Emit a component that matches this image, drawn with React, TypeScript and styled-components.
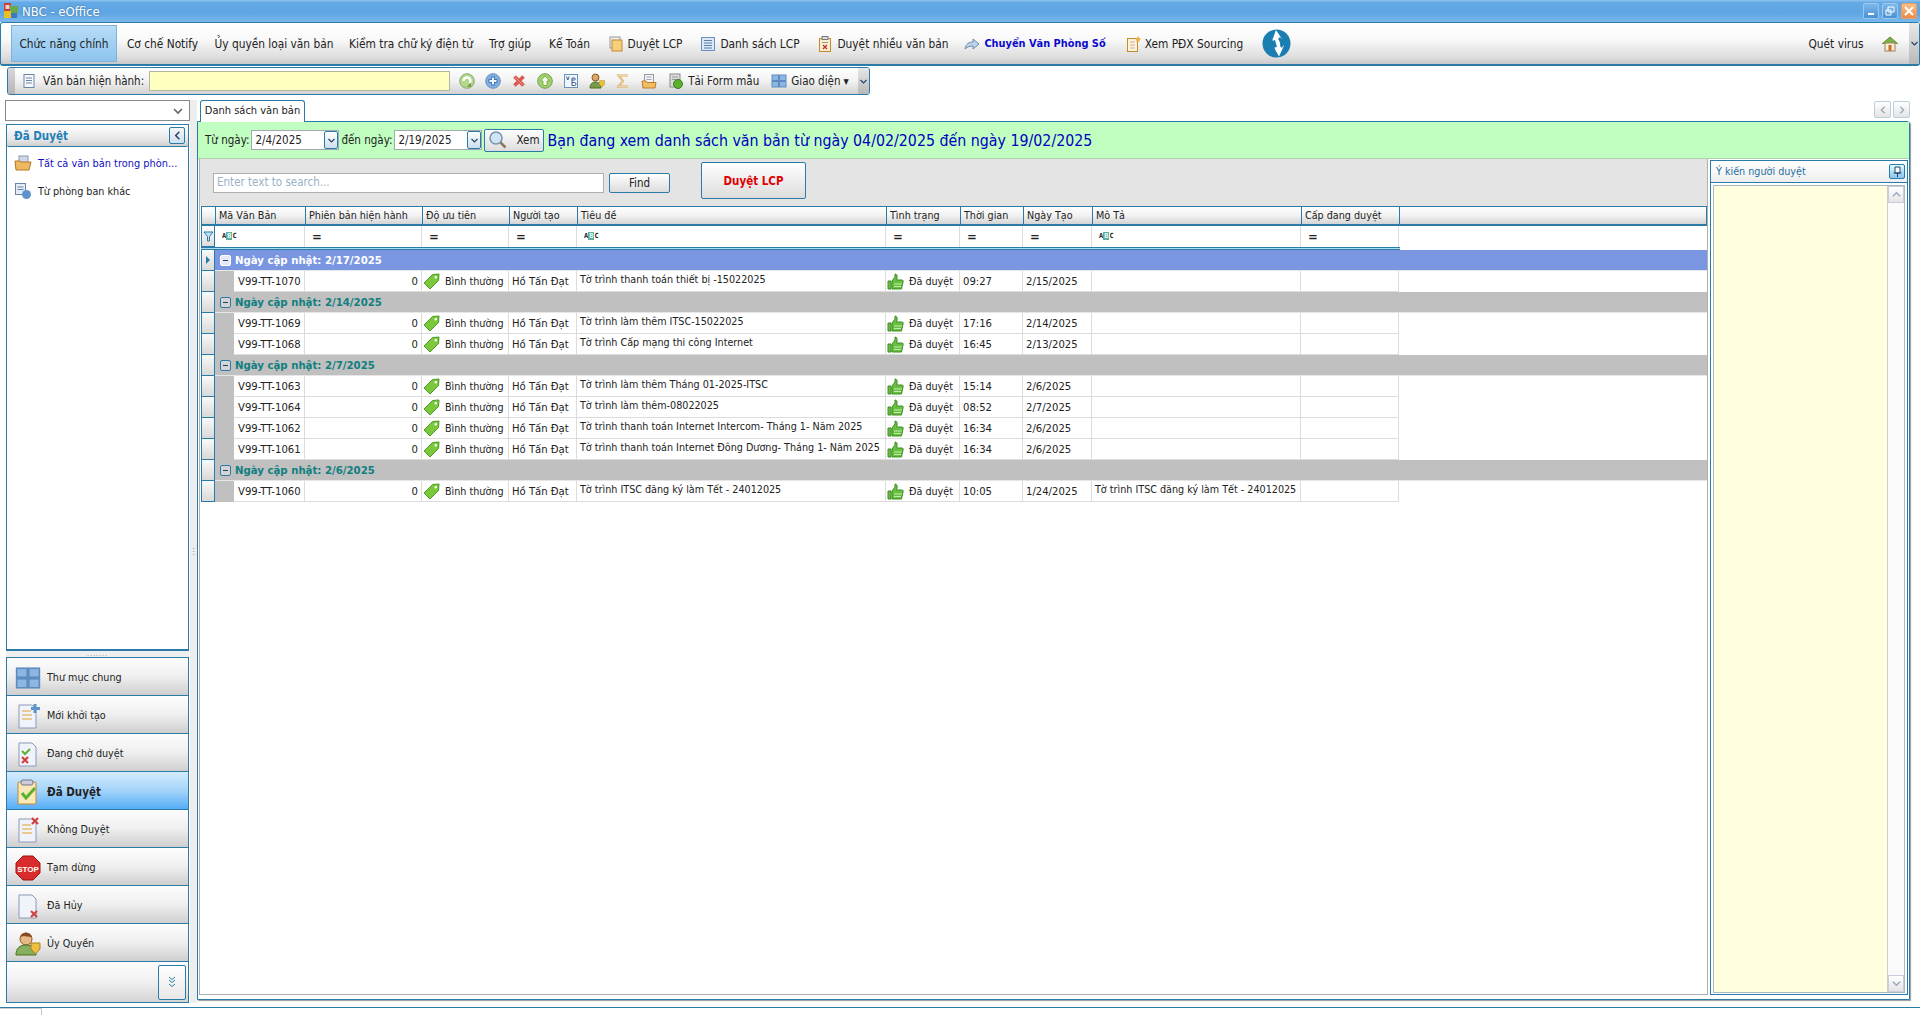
import React from 'react';
import styled, { createGlobalStyle } from 'styled-components';

const Global = createGlobalStyle`
  html, body { margin: 0; padding: 0; background: #fff; overflow: hidden; }
  * { box-sizing: border-box; }
  body { font-family: "DejaVu Sans Condensed", "DejaVu Sans", sans-serif; font-size: 11.5px; color: #222; }
`;

const BLUE = '#2a7ba8';
const FS = '11.5px';
const FS_MENU = '11.8px';
const FS_SM = '10.7px';

const Page = styled.div`width:1920px;height:1015px;display:flex;flex-direction:column;overflow:hidden;background:#fff;`;

const TitleBar = styled.div`height:22px;display:flex;align-items:center;padding-left:3px;flex:none;
  background:linear-gradient(#8fc3ef 0,#63a9e6 12%,#5fa5e3 60%,#7ab8ec 100%);`;
const TitleText = styled.span`color:#fff;font-size:13px;margin-left:3px;text-shadow:0 0 2px #35689a;flex:1;`;
const WinButton = styled.span<{ $close?: boolean }>`width:16px;height:16px;margin-right:3px;border-radius:2px;display:flex;align-items:center;justify-content:center;
  border:1px solid ${p => p.$close ? '#e4a070' : '#9cc8ee'};
  background:${p => p.$close ? 'linear-gradient(#f8c080,#ec8a4a)' : 'linear-gradient(#7db8ea,#4a90d4)'};`;

const MenuBar = styled.div`height:44px;flex:none;display:flex;align-items:stretch;border:1px solid ${BLUE};border-bottom-width:2px;border-radius:3px;
  background:linear-gradient(#fff 0,#f9f9f9 40%,#dcdcdc 85%,#c9c9c9 100%);padding:2px 0 2px 10px;`;
const MenuItem = styled.div<{ $w: number; $active?: boolean; $strong?: boolean }>`width:${p => p.$w}px;flex:none;display:flex;align-items:center;justify-content:center;gap:4px;white-space:nowrap;font-size:${p => p.$strong ? '10.9px' : FS_MENU};
  ${p => p.$active ? 'background:linear-gradient(#b8dcf6,#8cc4ee);border:1px solid #7fb2d8;' : ''}
  ${p => p.$strong ? 'font-weight:700;color:#0a0ad0;' : ''}`;
const MenuSpacer = styled.div`flex:1;`;
const EdgeStrip = styled.div<{ $w?: number }>`width:${p => p.$w ?? 10}px;flex:none;align-self:stretch;display:flex;align-items:center;justify-content:center;
  background:linear-gradient(#e8e8e8,#b8b8b8);color:#356;font-size:9px;`;
const MenuEnd = styled(EdgeStrip)`margin:-2px 0;`;

const ToolBar = styled.div`height:28px;width:863px;margin:1px 0 0 7px;flex:none;display:flex;align-items:center;border:1px solid ${BLUE};border-radius:3px;overflow:hidden;
  background:linear-gradient(#fff,#f2f2f2 50%,#d2d2d2);`;
const Grip = styled.div`width:7px;align-self:stretch;background:linear-gradient(#d8d8d8,#b4b4b4);flex:none;`;
const ToolLabel = styled.span`margin-left:6px;white-space:nowrap;font-size:${FS};`;
const CurrentDoc = styled.div`width:301px;height:20px;margin:0 9px 0 5px;flex:none;background:#ffffc0;border:1px solid #b4b4a0;`;
const ToolIcon = styled.span<{ $gap?: number; $lead?: number }>`margin-right:${p => p.$gap ?? 10}px;margin-left:${p => p.$lead ?? 0}px;display:flex;flex:none;`;
const ToolText = styled.span<{ $gap?: number }>`white-space:nowrap;font-size:${FS};margin-right:${p => p.$gap ?? 12}px;`;
const ToolFill = styled.div`flex:1;`;

const Content = styled.div`flex:none;height:903px;margin-top:5px;display:flex;padding-left:5px;`;
const LeftCol = styled.div`width:185px;flex:none;display:flex;flex-direction:column;`;
const Combo = styled.div`height:21px;flex:none;border:1px solid #8a8a8a;background:#fff;display:flex;align-items:center;justify-content:flex-end;padding-right:5px;`;
const TreePanel = styled.div`flex:1;margin:3px 1px 0;border:1px solid ${BLUE};display:flex;flex-direction:column;min-height:0;`;
const TreeHead = styled.div`height:22px;flex:none;display:flex;align-items:center;justify-content:space-between;padding:0 3px 0 7px;border-bottom:1px solid ${BLUE};
  background:linear-gradient(#fff,#e6e6e6 70%,#cfcfcf);color:#1f7fb8;font-weight:700;font-size:${FS};border-radius:2px;`;
const Collapse = styled.span`width:16px;height:17px;border:1px solid ${BLUE};border-radius:2px;background:linear-gradient(#f6f6f6,#cfe0ee);display:flex;align-items:center;justify-content:center;`;
const TreeItem = styled.div<{ $link?: boolean; $y: number }>`display:flex;align-items:center;height:22px;margin-top:${p => p.$y}px;padding-left:7px;gap:6px;color:${p => p.$link ? '#1010c0' : '#222'};font-size:${p => p.$link ? '10.9px' : FS_SM};white-space:nowrap;`;
const Handle = styled.div`height:7px;flex:none;margin:0 1px;background:#efefef;border-top:1px solid ${BLUE};display:flex;justify-content:center;align-items:center;color:#888;font-size:7px;line-height:4px;letter-spacing:1px;`;
const NavBox = styled.div`margin:0 1px;flex:none;border:1px solid ${BLUE};border-top:none;`;
const NavItem = styled.div<{ $active?: boolean }>`height:38px;display:flex;align-items:center;border-top:1px solid ${BLUE};font-size:${p => p.$active ? FS : FS_SM};white-space:nowrap;padding-top:2px;
  font-weight:${p => p.$active ? 700 : 400};
  background:${p => p.$active ? 'linear-gradient(#d4ecff,#a4d4fa 50%,#55aef6)' : 'linear-gradient(#fdfdfd,#efefef 50%,#cfcfcf)'};`;
const NavIcon = styled.span`width:40px;padding-left:8px;flex:none;display:flex;align-items:center;`;
const NavFoot = styled.div`height:41px;border-top:1px solid ${BLUE};display:flex;justify-content:flex-end;align-items:center;padding-right:2px;background:linear-gradient(#fdfdfd,#f0f0f0 50%,#d4d4d4);`;
const MoreBtn = styled.span`width:28px;height:35px;border:1px solid ${BLUE};border-radius:2px;color:${BLUE};display:flex;align-items:center;justify-content:center;background:linear-gradient(#fff,#e8e8e8);`;

const Splitter = styled.div`width:7px;flex:none;background:#ededed;display:flex;align-items:center;justify-content:center;color:#777;font-size:8px;line-height:4px;`;

const RightCol = styled.div`width:1714px;flex:none;display:flex;flex-direction:column;`;
const TabStrip = styled.div`height:21px;flex:none;display:flex;align-items:flex-end;padding:0 1px 0 3px;`;
const Tab = styled.div`width:105px;height:22px;margin-bottom:-1px;padding-bottom:2px;border:1px solid ${BLUE};border-bottom:none;border-radius:3px 3px 0 0;background:#fff;display:flex;align-items:center;justify-content:center;font-size:11px;white-space:nowrap;position:relative;z-index:1;`;
const TabFill = styled.div`flex:1;`;
const ScrollBtn = styled.span`width:17px;height:17px;margin:0 0 3px 2px;border:1px solid #b8cfe0;border-radius:2px;background:linear-gradient(#fff,#e4e4e4);display:flex;align-items:center;justify-content:center;`;
const MainPanel = styled.div`height:879px;width:1713px;flex:none;border:1px solid ${BLUE};border-radius:0 3px 0 0;display:flex;flex-direction:column;padding:0 0 2px 0;box-shadow:1px 1px 1px #999;`;
const DateBand = styled.div`height:37px;flex:none;background:#c0ffc0;border-bottom:1px solid #b0d0b0;display:flex;align-items:center;padding-left:7px;font-size:${FS};white-space:nowrap;`;
const DateBox = styled.div`width:88px;height:20px;margin:0 2px 0 2px;background:#fff;border:1px solid #a0a8b0;display:flex;align-items:center;justify-content:space-between;padding:0 0 0 3px;font-size:${FS};`;
const DropBtn = styled.span`width:14px;height:18px;border:1px solid ${BLUE};border-radius:2px;background:linear-gradient(#fff,#cde);display:flex;align-items:center;justify-content:center;`;
const ViewBtn = styled.div`width:60px;height:23px;border:1px solid ${BLUE};border-radius:2px;background:linear-gradient(#fff,#dcdcdc);display:flex;align-items:center;padding-left:3px;gap:8px;font-size:${FS};`;
const RangeText = styled.span`margin-left:3px;font-size:15.8px;color:#0000c0;`;

const Body = styled.div`flex:1;display:flex;min-height:0;padding-left:1px;`;
const GridSection = styled.div`width:1509px;flex:none;border:1px solid #aab2b8;border-top:none;display:flex;flex-direction:column;margin-bottom:2px;`;
const SearchBar = styled.div`height:47px;flex:none;background:#e4e4e4;display:flex;align-items:flex-start;padding-left:13px;`;
const SearchInput = styled.div`width:391px;height:20px;margin-top:14px;background:#fff;border:1px solid #b0b0b0;color:#9ab0c4;padding-left:3px;font-size:${FS};line-height:16px;`;
const FindBtn = styled.div`width:61px;height:20px;margin:14px 0 0 5px;border:1px solid ${BLUE};border-radius:2px;background:linear-gradient(#fff,#dcdcdc);display:flex;align-items:center;justify-content:center;font-size:${FS};`;
const ApproveBtn = styled.div`width:105px;height:37px;margin:3px 0 0 31px;border:1px solid ${BLUE};border-radius:2px;background:linear-gradient(#fff,#dcdcdc);display:flex;align-items:center;justify-content:center;color:#e00000;font-weight:700;font-size:${FS};`;

const COLS = '14px 90px 117px 87px 68px 309px 74px 63px 69px 209px 98px';
const RCOLS = '14px 19px 71px 117px 87px 68px 309px 74px 63px 69px 209px 98px';

const GridHead = styled.div`height:20px;flex:none;margin-left:1px;display:grid;grid-template-columns:${COLS} 1fr;border:1px solid ${BLUE};border-bottom-width:2px;background:linear-gradient(#fff,#f2f2f2 50%,#d4d4d4);`;
const HeadCell = styled.div`border-right:1px solid ${BLUE};padding-left:3px;line-height:17px;font-size:${FS_SM};white-space:nowrap;overflow:hidden;`;
const HeadEnd = styled.div``;
const FilterRow = styled.div`height:21px;flex:none;margin-left:1px;display:grid;grid-template-columns:${COLS};width:1199px;background:#fff;`;
const FilterCell = styled.div`border-right:1px solid #dcdcdc;display:flex;align-items:center;padding-left:7px;font-weight:700;font-size:13px;`;
const FilterLead = styled.div`border:1px solid ${BLUE};border-top:none;background:linear-gradient(#fff,#ddd);display:flex;align-items:center;justify-content:center;`;
const FilterEnd = styled.div`height:3px;flex:none;margin-left:1px;width:1199px;border-top:1px solid ${BLUE};border-bottom:1px solid ${BLUE};background:#a8ddf4;`;
const Abc = styled.span`font-family:"DejaVu Sans Mono",monospace;font-size:7px;font-weight:700;line-height:9px;`;
const AbcB = styled.span`background:#5fae9a;color:#dff;padding:0 1px;`;

const GridBody = styled.div`flex:1;margin-left:1px;background:#fff;`;
const GroupRow = styled.div`height:21px;display:flex;align-items:center;`;
const Lead = styled.div`width:14px;height:21px;flex:none;border:1px solid ${BLUE};border-top:none;background:linear-gradient(#fafafa,#d8d8d8);display:flex;align-items:center;justify-content:center;`;
const GroupLabel = styled.div<{ $first?: boolean }>`flex:1;height:21px;display:flex;align-items:center;padding-left:5px;gap:4px;font-weight:700;font-size:11.3px;border-bottom:1px solid #e6e6e6;
  background:${p => p.$first ? '#7a96e0' : '#c0c0c0'};color:${p => p.$first ? '#fff' : '#0f7f7f'};`;
const Toggle = styled.span<{ $first?: boolean }>`width:11px;height:11px;border:1px solid ${p => p.$first ? '#fff' : BLUE};border-radius:2px;background:${p => p.$first ? '#e4e8f8' : '#d4d4d4'};display:flex;align-items:center;justify-content:center;`;
const Minus = styled.span`width:5px;height:1px;background:#245;`;
const WinMinus = styled.span`width:6px;height:2px;background:#fff;margin-top:6px;`;
const DataRow = styled.div`height:21px;width:1199px;display:grid;grid-template-columns:${RCOLS};`;
const Indent = styled.div`background:#c0c0c0;`;
const Cell = styled.div<{ $right?: boolean; $raise?: boolean }>`border-right:1px solid #dcdcdc;border-bottom:1px solid #dcdcdc;display:flex;align-items:center;padding:${p => p.$raise ? '0 0 3px 3px' : '0 3px'};white-space:nowrap;overflow:hidden;font-size:${p => p.$raise ? FS_SM : '11.2px'};justify-content:${p => p.$right ? 'flex-end' : 'flex-start'};`;
const CodeCell = styled(Cell)`padding-left:4px;`;
const IconCell = styled(Cell)`padding-left:1px;gap:5px;font-size:${FS_SM};`;

const SidePane = styled.div`width:198px;margin-left:2px;flex:none;display:flex;flex-direction:column;border:1px solid ${BLUE};margin-top:1px;margin-bottom:2px;`;
const SideHead = styled.div`height:22px;flex:none;border-bottom:1px solid ${BLUE};background:linear-gradient(#fff,#eee);display:flex;align-items:center;justify-content:space-between;padding:0 2px 0 5px;color:#1f6f9f;font-size:${FS_SM};`;
const Pin = styled.span`width:16px;height:15px;border:1px solid ${BLUE};border-radius:2px;background:linear-gradient(#dff,#8cc4ee);display:flex;align-items:center;justify-content:center;`;
const SideBody = styled.div`flex:1;margin:2px 2px 1px 2px;display:flex;min-height:0;border:1px solid #a8b8c0;`;
const Note = styled.div`flex:1;background:#ffffe0;`;
const VScroll = styled.div`width:17px;flex:none;background:#fafafa;border-left:1px solid #ccc;display:flex;flex-direction:column;justify-content:space-between;`;
const VBtn = styled.span`height:17px;border:1px solid #ccd;background:linear-gradient(#fff,#e4e4e4);display:flex;align-items:center;justify-content:center;`;

const StatusBar = styled.div`height:8px;margin-top:4px;flex:none;border-top:1px solid ${BLUE};display:flex;`;
const StatusCell = styled.div`width:42px;border-right:1px solid #c8c8c8;border-top:1px solid #ccc;`;

const Svg: React.FC<{ s?: number; vb?: string; children: React.ReactNode }> = ({ s = 16, vb = '0 0 16 16', children }) => (
  <svg width={s} height={s} viewBox={vb} style={{ display: 'block', flex: 'none' }}>{children}</svg>
);
const AppLogo = () => <Svg s={16}><rect x="1" y="0" width="7" height="8" fill="#c9423a" /><rect x="2.500" y="2" width="4" height="4" fill="#f0d0c8" /><rect x="7" y="3" width="8" height="7" fill="#6aa84f" /><rect x="1" y="8" width="7" height="7" fill="#e8c020" /><rect x="8" y="10" width="6" height="5" fill="#3f78c0" /></Svg>;
const CopyI = () => <Svg><rect x="2" y="1" width="10" height="11" fill="#eee" stroke="#999" /><rect x="4" y="4" width="10" height="11" fill="#f6cf7c" stroke="#c58a2a" /></Svg>;
const ListI = () => <Svg><rect x="1.500" y="1.500" width="13" height="13" fill="#dce8f6" stroke="#6a8fc0" /><path d="M4 4.500h8M4 7h8M4 9.500h8M4 12h8" stroke="#5a7fb0" /></Svg>;
const ClipX = () => <Svg><rect x="2.500" y="2.500" width="11" height="13" fill="#fbeecb" stroke="#c48a30" /><rect x="5" y="0.500" width="6" height="3" fill="#ddd" stroke="#777" /><path d="M6 9l4 4M10 9l-4 4" stroke="#b33" strokeWidth="1.300" /><path d="M5 6.500h6" stroke="#999" /></Svg>;
const ShareI = () => <Svg><path d="M1 13C2 8 5 6 9 6V3l6 5-6 5v-3C6 10 3 11 1 13z" fill="#bcd3ea" stroke="#6c8cb0" /></Svg>;
const DocStar = () => <Svg><rect x="2.500" y="2.500" width="10" height="13" fill="#fff4d8" stroke="#c48a30" /><path d="M5 6h5M5 9h5M5 12h5" stroke="#caa" /><path d="M13 0l1 2 2 .5-1.500 1.500.3 2-1.800-1-1.800 1 .3-2L10 2.500 12 2z" fill="#e8b040" /></Svg>;
const RefreshLogo = () => (
  <Svg s={29} vb="0 0 29 29">
    <circle cx="14.500" cy="14.500" r="14" fill="#1a7fb0" />
    <path d="M14 1l6 9-3 .5 2 7 3-1-5 11-5-9 3-.5-2-7-3 1z" fill="#fff" />
    <path d="M11 12c-1 2 0 5 2 7l-2 2c-4-3-4-8-2-11zM18 17c1-2 0-5-2-7l2-2c4 3 4 8 2 11z" fill="#1a7fb0" />
  </Svg>
);
const HomeI = () => <Svg s={18} vb="0 0 18 18"><path d="M1 9l8-7 8 7" fill="#7db24a" stroke="#5a8a30" /><rect x="4" y="8" width="10" height="8" fill="#f7efd8" stroke="#a08050" /><rect x="7.500" y="10" width="3" height="6" fill="#c8702a" /></Svg>;
const NoteI = () => <Svg><rect x="3" y="1.500" width="10" height="13" fill="#f4f7fb" stroke="#6d86a6" /><path d="M5 5h6M5 7.500h6M5 10h6" stroke="#6d86a6" /></Svg>;
const RefreshI = () => <Svg><circle cx="8" cy="8" r="7.300" fill="#b4d88a" stroke="#8aa878" /><path d="M4.500 8a3.500 3.500 0 116 2.400" fill="none" stroke="#fff" strokeWidth="2.400" /><path d="M8 14l4.500-.5-1-4z" fill="#6f9a48" /></Svg>;
const PlusI = () => <Svg><circle cx="8" cy="8" r="7.300" fill="#7fb0e6" stroke="#6d8fb8" /><path d="M8 3.500v9M3.500 8h9" stroke="#3f6ea8" strokeWidth="3.600" /><path d="M8 4.500v7M4.500 8h7" stroke="#eef6ff" strokeWidth="2" /></Svg>;
const XI = () => <Svg><path d="M3.500 3.500l9 9M12.500 3.500l-9 9" stroke="#dc5a52" strokeWidth="3.800" /><path d="M4 4l8 8" stroke="#ee9088" strokeWidth="1" /></Svg>;
const UpI = () => <Svg><circle cx="8" cy="8" r="7.300" fill="#9ed468" stroke="#7a9a58" /><path d="M8 3l4.500 5H10v4.500H6V8H3.500z" fill="#f2fbe8" stroke="#6a9a40" strokeWidth=".7" /></Svg>;
const VbI = () => <Svg><rect x="1.500" y="1.500" width="13" height="13" fill="#f0f6fd" stroke="#6a90c0" /><path d="M3.500 3.500l1.300 3.500 1.300-3.500M9 7h2.300a1 1 0 000-2H9zM9 12.500V7M9 9.500h2.500a1.500 1.500 0 010 3H9" fill="none" stroke="#305080" strokeWidth=".9" /></Svg>;
const UserI = () => <Svg><circle cx="6.500" cy="4.500" r="3.500" fill="#d8a870" stroke="#8a5a20" /><path d="M1 15c0-4 2.500-6 5.500-6s5.500 2 5.500 6z" fill="#7a9a4a" stroke="#4a7020" /><path d="M10.500 7.500h5v4l-2.500 2.500-2.500-2.500z" fill="#e8c040" stroke="#b89020" strokeWidth=".5" /></Svg>;
const SigmaI = () => <Svg><path d="M13 2.500H3.500l4.500 5.500-4.500 5.500H13" fill="none" stroke="#dda860" strokeWidth="2" /><path d="M13 2.500H3.500l4.500 5.500-4.500 5.500H13" fill="none" stroke="#fbe8c8" strokeWidth=".7" /></Svg>;
const FolderDoc = () => <Svg><rect x="3.500" y="1.500" width="9" height="9" fill="#f3f3f3" stroke="#999" /><path d="M5.500 4h5M5.500 6.500h5" stroke="#9ab" /><path d="M1 8h4l1 1.500h9l-1 5.500H2z" fill="#f2bc62" stroke="#b87e2a" /></Svg>;
const FormI = () => <Svg><rect x="2" y="1" width="10" height="13" fill="#ddd" stroke="#888" /><path d="M4 4h6M4 6.500h4" stroke="#999" /><circle cx="10" cy="11" r="4.500" fill="#5cb030" stroke="#3a7a20" /></Svg>;
const GridI: React.FC<{ s?: number }> = ({ s = 16 }) => <Svg s={s}><rect x="1" y="2" width="6.500" height="5.500" fill="#8eb6e2" stroke="#5f8cc0" /><rect x="8.500" y="2" width="6.500" height="5.500" fill="#8eb6e2" stroke="#5f8cc0" /><rect x="1" y="8.500" width="6.500" height="5.500" fill="#8eb6e2" stroke="#5f8cc0" /><rect x="8.500" y="8.500" width="6.500" height="5.500" fill="#8eb6e2" stroke="#5f8cc0" /></Svg>;
const Chev: React.FC<{ dir: 'down' | 'up' | 'left' | 'right'; c?: string; s?: number }> = ({ dir, c = '#666', s = 9 }) => {
  const d = { down: 'M1.500 3l3 3 3-3', up: 'M1.500 6l3-3 3 3', left: 'M6 1.500l-3 3 3 3', right: 'M3 1.500l3 3-3 3' }[dir];
  return <Svg s={s} vb="0 0 9 9"><path d={d} fill="none" stroke={c} strokeWidth="1.200" /></Svg>;
};
const SearchI = () => <Svg s={20} vb="0 0 20 20"><circle cx="8" cy="8" r="6" fill="#cfe4f6" stroke="#7a93ad" strokeWidth="1.500" /><path d="M12.500 12.500l5 5" stroke="#8a7a5a" strokeWidth="2.500" /></Svg>;
const FolderOpen = () => <Svg s={18} vb="0 0 18 18"><rect x="5" y="2" width="9" height="8" fill="#cfd8ea" stroke="#8a98b0" /><path d="M1 7h5l1 1h10l-2 8H2z" fill="#eeb860" stroke="#b07a28" /></Svg>;
const DeptI = () => <Svg s={18} vb="0 0 18 18"><rect x="1.500" y="1.500" width="10" height="11" fill="#e4ecf6" stroke="#6a86a8" /><path d="M3.500 5h6M3.500 7.500h6" stroke="#6a86a8" /><circle cx="12.500" cy="12.500" r="4.500" fill="#5f93cc" /></Svg>;
const TagI = () => <Svg s={17} vb="0 0 17 17"><path d="M16 1l-.5 6.500L7 16 1 10l8.500-8.500z" fill="#7cc83c" stroke="#4d9a28" /><circle cx="12.800" cy="4.200" r="1.200" fill="#fff" /></Svg>;
const ThumbI = () => <Svg s={17} vb="0 0 17 17"><path d="M1 8h3v8H1zM5 8l3-4V1c2 0 2.500 2 2 4l-.3 2H15c1.200 0 1.500 1 1 2l-1.500 7H5z" fill="#69c040" stroke="#3f8c24" /><path d="M7 11h8M7 13.500h7" stroke="#c0ecb0" /></Svg>;
const FunnelI = () => <Svg s={11} vb="0 0 11 11"><path d="M1 1h9L6.500 5.500V10h-2V5.500z" fill="#bfe4f4" stroke="#2a7ba8" /></Svg>;
const Arrow = () => <Svg s={8} vb="0 0 8 8"><path d="M2 0l4 4-4 4z" fill="#2a7ba8" /></Svg>;
const PinI = () => <Svg s={11} vb="0 0 11 11"><path d="M3 1h5v6H3zM1.500 7h8M5.500 7v4" fill="#fff" stroke="#246" /></Svg>;

const NavPage: React.FC<{ children?: React.ReactNode }> = ({ children }) => <Svg s={26} vb="0 0 26 26"><path d="M4 2h13l4 4v19H4z" fill="#f0f4fa" stroke="#8a9ab8" />{children}</Svg>;
const NavStop = () => <Svg s={26} vb="0 0 26 26"><path d="M8 1h10l7 7v10l-7 7H8l-7-7V8z" fill="#d92b2b" stroke="#9a1414" /><text x="13" y="16.500" fontSize="8" fontWeight="700" fill="#fff" textAnchor="middle" fontFamily="Liberation Sans, sans-serif">STOP</text></Svg>;
const NavUser = () => <Svg s={26} vb="0 0 26 26"><circle cx="11" cy="8" r="6" fill="#e8b888" stroke="#8a5a20" /><path d="M5 6c2-6 11-5 12 0-4 0-8-1-8-1z" fill="#8a4a20" /><path d="M1 24c0-7 4-10 10-10s10 3 10 10z" fill="#86b060" stroke="#4a7020" /><path d="M16 12h9v6l-4.500 5-4.500-5z" fill="#eec040" stroke="#a88020" /></Svg>;
const NavClip = () => <Svg s={26} vb="0 0 26 26"><rect x="3" y="3" width="18" height="22" rx="1" fill="#fbe8b8" stroke="#c08a30" /><rect x="6" y="1" width="12" height="5" rx="2" fill="#ccd" stroke="#778" /><path d="M7 14l4 5 9-10" fill="none" stroke="#5ab030" strokeWidth="3" /></Svg>;
const X2: React.FC<{ x: number; y: number }> = ({ x, y }) => <path d={`M${x} ${y}l6 6M${x + 6} ${y}l-6 6`} stroke="#d04040" strokeWidth="2.200" />;

const menus = [
  { w: 106, t: 'Chức năng chính', active: true },
  { w: 91, t: 'Cơ chế Notify' },
  { w: 132, t: 'Ủy quyền loại văn bản' },
  { w: 142, t: 'Kiểm tra chữ ký điện tử' },
  { w: 56, t: 'Trợ giúp' },
  { w: 63, t: 'Kế Toán' },
  { w: 88, t: 'Duyệt LCP', i: <CopyI /> },
  { w: 122, t: 'Danh sách LCP', i: <ListI /> },
  { w: 144, t: 'Duyệt nhiều văn bản', i: <ClipX /> },
  { w: 160, t: 'Chuyển Văn Phòng Số', i: <ShareI />, strong: true },
  { w: 138, t: 'Xem PĐX Sourcing', i: <DocStar /> },
];
const cols = ['', 'Mã Văn Bản', 'Phiên bản hiện hành', 'Độ ưu tiên', 'Người tạo', 'Tiêu đề', 'Tình trạng', 'Thời gian', 'Ngày Tạo', 'Mô Tả', 'Cấp đang duyệt'];
const filters = ['abc', '=', '=', '=', 'abc', '=', '=', '=', 'abc', '='];

type R = [string, string, string, string, string?];
const groups: { d: string; rows: R[] }[] = [
  { d: '2/17/2025', rows: [['V99-TT-1070', 'Tờ trình thanh toán thiết bị -15022025', '09:27', '2/15/2025']] },
  { d: '2/14/2025', rows: [['V99-TT-1069', 'Tờ trình làm thêm ITSC-15022025', '17:16', '2/14/2025'], ['V99-TT-1068', 'Tờ trình Cấp mạng thi công Internet', '16:45', '2/13/2025']] },
  { d: '2/7/2025', rows: [['V99-TT-1063', 'Tờ trình làm thêm Tháng 01-2025-ITSC', '15:14', '2/6/2025'], ['V99-TT-1064', 'Tờ trình làm thêm-08022025', '08:52', '2/7/2025'], ['V99-TT-1062', 'Tờ trình thanh toán Internet Intercom- Tháng 1- Năm 2025', '16:34', '2/6/2025'], ['V99-TT-1061', 'Tờ trình thanh toán Internet Đông Dương- Tháng 1- Năm 2025', '16:34', '2/6/2025']] },
  { d: '2/6/2025', rows: [['V99-TT-1060', 'Tờ trình ITSC đăng ký làm Tết - 24012025', '10:05', '1/24/2025', 'Tờ trình ITSC đăng ký làm Tết - 24012025']] },
];
const navs: { t: string; i: React.ReactNode; active?: boolean }[] = [
  { t: 'Thư mục chung', i: <GridI s={26} /> },
  { t: 'Mới khởi tạo', i: <NavPage><path d="M7 8h9M7 12h10M7 16h10" stroke="#e0a030" /><path d="M20 1v9M16 5.500h9" stroke="#5f93cc" strokeWidth="3" /></NavPage> },
  { t: 'Đang chờ duyệt', i: <NavPage><path d="M7 10l3 3 5-5" fill="none" stroke="#5ab030" strokeWidth="2" /><X2 x={7} y={16} /></NavPage> },
  { t: 'Đã Duyệt', i: <NavClip />, active: true },
  { t: 'Không Duyệt', i: <NavPage><path d="M7 8h9M7 12h10M7 16h10" stroke="#e0a030" /><X2 x={17} y={1} /></NavPage> },
  { t: 'Tạm dừng', i: <NavStop /> },
  { t: 'Đã Hủy', i: <NavPage><X2 x={16} y={18} /></NavPage> },
  { t: 'Ủy Quyền', i: <NavUser /> },
];

const AbcMark = () => <Abc>A<AbcB>B</AbcB>C</Abc>;

export default function App() {
  return (
    <Page>
      <Global />
      <TitleBar>
        <AppLogo />
        <TitleText>NBC - eOffice</TitleText>
        <WinButton><WinMinus /></WinButton>
        <WinButton><Svg s={10} vb="0 0 10 10"><path d="M3 1h6v5H3zM1 4h5v5H1z" fill="none" stroke="#fff" /></Svg></WinButton>
        <WinButton $close><Svg s={10} vb="0 0 10 10"><path d="M1 1l8 8M9 1l-8 8" stroke="#fff" strokeWidth="2" /></Svg></WinButton>
      </TitleBar>
      <MenuBar>
        {menus.map(m => <MenuItem key={m.t} $w={m.w} $active={m.active} $strong={m.strong}>{m.i}{m.t}</MenuItem>)}
        <MenuItem $w={46}><RefreshLogo /></MenuItem>
        <MenuSpacer />
        <MenuItem $w={70}>Quét virus</MenuItem>
        <MenuItem $w={38}><HomeI /></MenuItem>
        <MenuEnd><Chev dir="down" c="#246" /></MenuEnd>
      </MenuBar>
      <ToolBar>
        <Grip />
        <ToolIcon $gap={0} $lead={6}><NoteI /></ToolIcon>
        <ToolLabel>Văn bản hiện hành:</ToolLabel>
        <CurrentDoc />
        <ToolIcon><RefreshI /></ToolIcon>
        <ToolIcon><PlusI /></ToolIcon>
        <ToolIcon><XI /></ToolIcon>
        <ToolIcon><UpI /></ToolIcon>
        <ToolIcon><VbI /></ToolIcon>
        <ToolIcon><UserI /></ToolIcon>
        <ToolIcon><SigmaI /></ToolIcon>
        <ToolIcon $gap={11}><FolderDoc /></ToolIcon>
        <ToolIcon $gap={4}><FormI /></ToolIcon>
        <ToolText>Tải Form mẫu</ToolText>
        <ToolIcon $gap={4}><GridI /></ToolIcon>
        <ToolText $gap={3}>Giao diện</ToolText>
        <ToolText $gap={0}>▾</ToolText>
        <ToolFill />
        <EdgeStrip $w={11}><Chev dir="down" c="#246" /></EdgeStrip>
      </ToolBar>
      <Content>
        <LeftCol>
          <Combo><Chev dir="down" s={12} /></Combo>
          <TreePanel>
            <TreeHead>Đã Duyệt<Collapse><Chev dir="left" c="#246" s={11} /></Collapse></TreeHead>
            <TreeItem $link $y={5}><FolderOpen />Tất cả văn bản trong phòn...</TreeItem>
            <TreeItem $y={6}><DeptI />Từ phòng ban khác</TreeItem>
          </TreePanel>
          <Handle>.......</Handle>
          <NavBox>
            {navs.map(n => <NavItem key={n.t} $active={n.active}><NavIcon>{n.i}</NavIcon>{n.t}</NavItem>)}
            <NavFoot><MoreBtn><Svg s={12} vb="0 0 12 12"><path d="M3 1l3 2.500L9 1M3 4l3 2.500L9 4M3 8l3 2.500L9 8" fill="none" stroke="#2a7ba8" /></Svg></MoreBtn></NavFoot>
          </NavBox>
        </LeftCol>
        <Splitter>⋮</Splitter>
        <RightCol>
          <TabStrip>
            <Tab>Danh sách văn bản</Tab>
            <TabFill />
            <ScrollBtn><Chev dir="left" c="#9ab" s={10} /></ScrollBtn>
            <ScrollBtn><Chev dir="right" c="#9ab" s={10} /></ScrollBtn>
          </TabStrip>
          <MainPanel>
            <DateBand>
              Từ ngày:
              <DateBox>2/4/2025<DropBtn><Chev dir="down" c="#246" /></DropBtn></DateBox>
              đến ngày:
              <DateBox>2/19/2025<DropBtn><Chev dir="down" c="#246" /></DropBtn></DateBox>
              <ViewBtn><SearchI />Xem</ViewBtn>
              <RangeText>Bạn đang xem danh sách văn bản từ ngày 04/02/2025 đến ngày 19/02/2025</RangeText>
            </DateBand>
            <Body>
              <GridSection>
                <SearchBar>
                  <SearchInput>Enter text to search...</SearchInput>
                  <FindBtn>Find</FindBtn>
                  <ApproveBtn>Duyệt LCP</ApproveBtn>
                </SearchBar>
                <GridHead>
                  {cols.map(c => <HeadCell key={c}>{c}</HeadCell>)}
                  <HeadEnd />
                </GridHead>
                <FilterRow>
                  <FilterLead><FunnelI /></FilterLead>
                  {filters.map((f, i) => <FilterCell key={i}>{f === 'abc' ? <AbcMark /> : '='}</FilterCell>)}
                </FilterRow>
                <FilterEnd />
                <GridBody>
                  {groups.map((g, gi) => (
                    <React.Fragment key={g.d}>
                      <GroupRow>
                        <Lead>{gi === 0 && <Arrow />}</Lead>
                        <GroupLabel $first={gi === 0}><Toggle $first={gi === 0}><Minus /></Toggle>Ngày cập nhật: {g.d}</GroupLabel>
                      </GroupRow>
                      {g.rows.map(r => (
                        <DataRow key={r[0]}>
                          <Lead />
                          <Indent />
                          <CodeCell>{r[0]}</CodeCell>
                          <Cell $right>0</Cell>
                          <IconCell><TagI />Bình thường</IconCell>
                          <Cell>Hồ Tấn Đạt</Cell>
                          <Cell $raise>{r[1]}</Cell>
                          <IconCell><ThumbI />Đã duyệt</IconCell>
                          <Cell>{r[2]}</Cell>
                          <Cell>{r[3]}</Cell>
                          <Cell $raise>{r[4]}</Cell>
                          <Cell />
                        </DataRow>
                      ))}
                    </React.Fragment>
                  ))}
                </GridBody>
              </GridSection>
              <SidePane>
                <SideHead>Ý kiến người duyệt<Pin><PinI /></Pin></SideHead>
                <SideBody>
                  <Note />
                  <VScroll>
                    <VBtn><Chev dir="up" c="#9ab" s={11} /></VBtn>
                    <VBtn><Chev dir="down" c="#9ab" s={11} /></VBtn>
                  </VScroll>
                </SideBody>
              </SidePane>
            </Body>
          </MainPanel>
        </RightCol>
      </Content>
      <StatusBar><StatusCell /></StatusBar>
    </Page>
  );
}
